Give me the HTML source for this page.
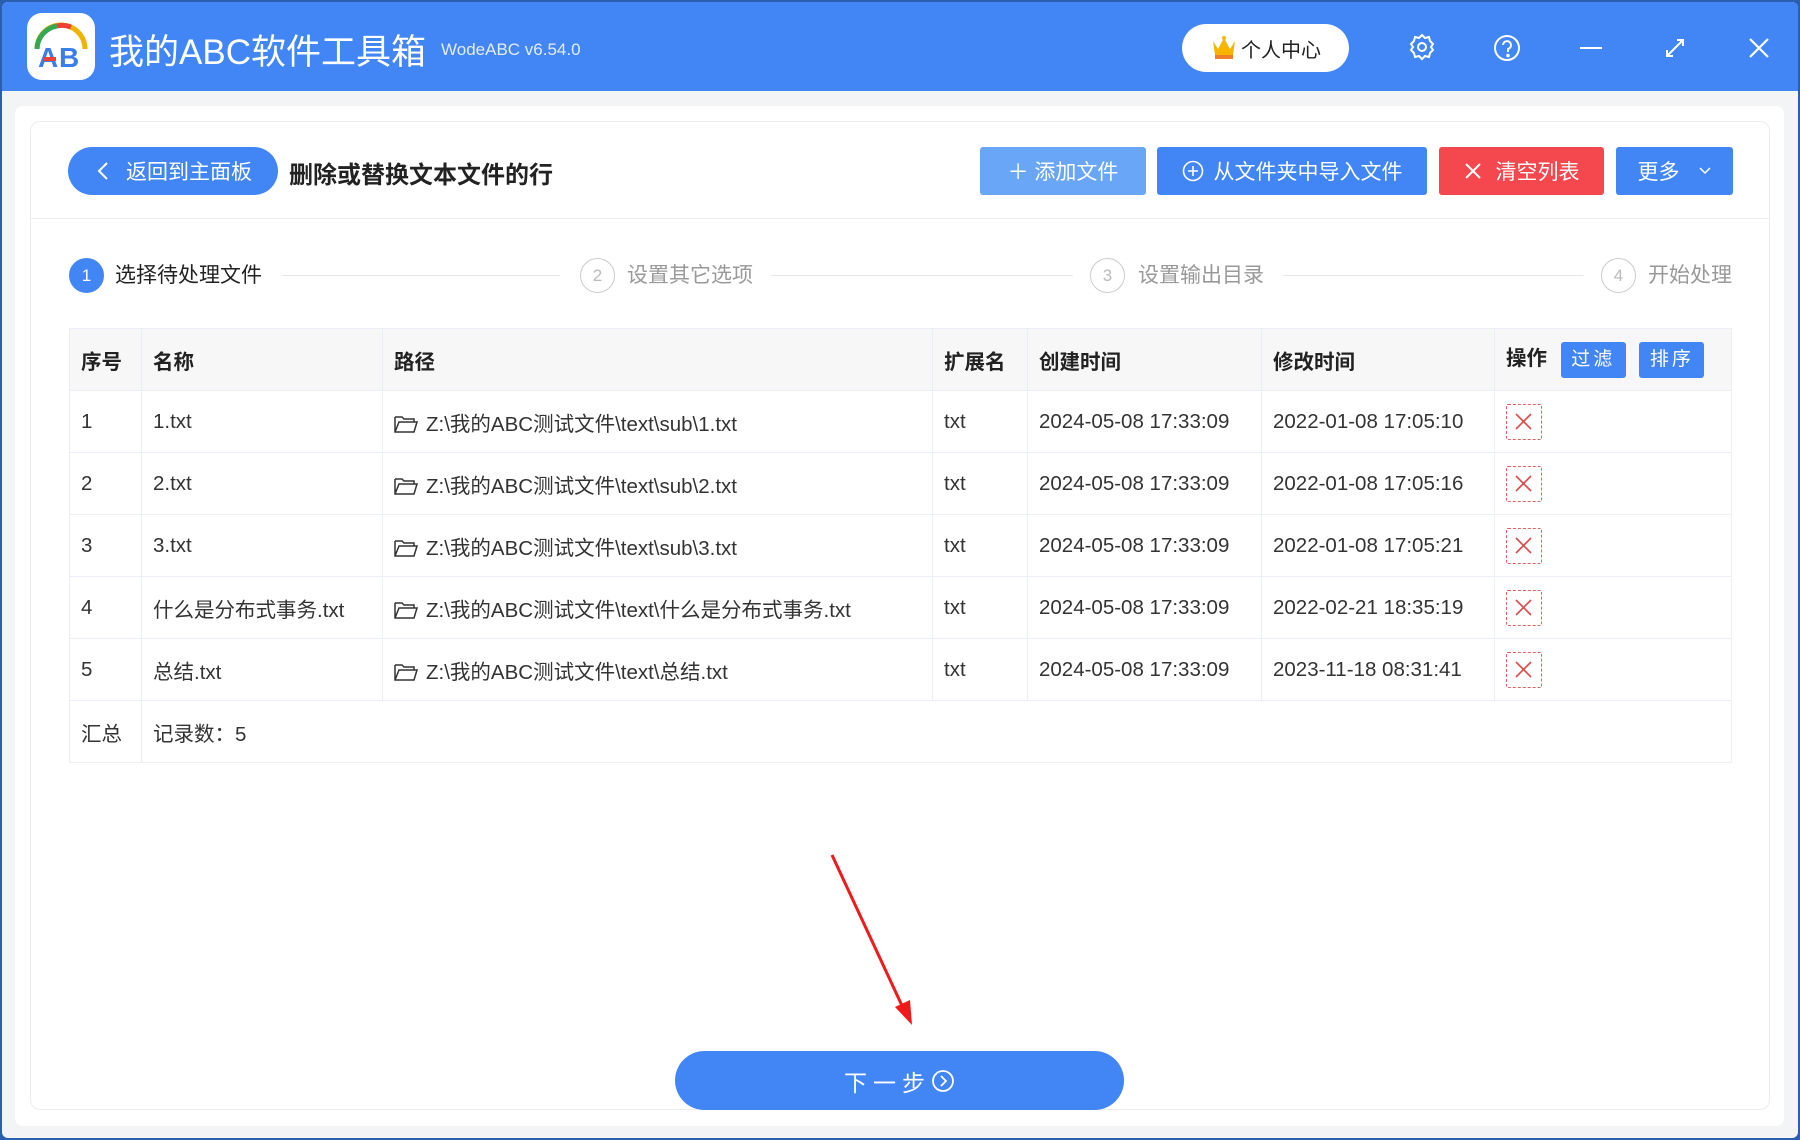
<!DOCTYPE html>
<html><head><meta charset="utf-8"><style>
*{box-sizing:border-box;margin:0;padding:0}
body{width:1800px;height:1140px;overflow:hidden;background:#2a5fb0;font-family:"Liberation Sans","Noto Sans CJK SC",sans-serif;position:relative}
.a{position:absolute}
#win{left:2px;top:2px;width:1796px;height:1136px;background:#f3f4f6;border-radius:6px;overflow:hidden}
#bar{left:0;top:0;width:1796px;height:89px;background:#4286f5}
.t{white-space:nowrap}
.btn{color:#fff;font-size:21px;display:flex;align-items:center;justify-content:center;border-radius:3px;height:48px;top:147px}
.step{font-size:21px;color:#999}
.circ{width:35px;height:35px;border-radius:50%;border:1.5px solid #ccc;color:#bbb;font-size:17px;display:flex;align-items:center;justify-content:center;top:256px}
.line{height:1px;background:#e6e6e6;top:273px}
table{border-collapse:collapse;position:absolute;left:69px;top:328px;width:1663px;font-size:20.5px;color:#333}
td{border:1px solid #ebeef5;padding:0 11px;height:62px;white-space:nowrap}
tr.h td{background:#f7f7f7;font-weight:bold;color:#222;font-size:20.5px}
.del{display:inline-block;width:36px;height:36px;border:1.5px dashed #e06060;border-radius:2px;vertical-align:middle;position:relative}
.fold{display:inline-block;vertical-align:-3px;margin-right:8px}
</style></head><body>
<div id="win" class="a">
<div id="bar" class="a">
 <div class="a" style="left:25px;top:11px;width:68px;height:67px;background:#fff;border-radius:15px">
  <svg width="68" height="67" viewBox="0 0 68 67"><path d="M10 36 A24 24 0 0 1 58 36" fill="none" stroke="#f0b400" stroke-width="5"/><path d="M10 36 A24 24 0 0 1 30 13" fill="none" stroke="#34a853" stroke-width="5"/><path d="M30 13 A24 24 0 0 1 44 14" fill="none" stroke="#ea4335" stroke-width="5"/>
  <text x="11" y="54" font-size="28" font-weight="bold" fill="#3b7ded" font-family="Liberation Sans">A</text><text x="32" y="54" font-size="28" font-weight="bold" fill="#3b7ded" font-family="Liberation Sans">B</text><rect x="17" y="44" width="12" height="4" fill="#ea4335"/></svg>
 </div>
 <div class="a t" style="left:107px;top:22px;font-size:35px;color:#fff">我的ABC软件工具箱</div>
 <div class="a t" style="left:439px;top:38px;font-size:17px;color:#e4ecfb">WodeABC v6.54.0</div>
 <div class="a" style="left:1180px;top:22px;width:167px;height:48px;background:#fff;border-radius:24px;display:flex;align-items:center;justify-content:center;font-size:20px;color:#222">
  <svg width="28" height="26" viewBox="0 0 28 26" style="margin-right:3px"><path d="M3 6 L8 14 L14 3 L20 14 L25 6 L23 20 L5 20 Z" fill="#f7b500"/><rect x="5" y="20" width="18" height="4" fill="#f07d2a"/><circle cx="14" cy="3" r="2" fill="#f7b500"/></svg>个人中心</div>
 <svg class="a" style="left:1405px;top:30px" width="30" height="30" viewBox="0 0 30 30" fill="none" stroke="#fff" stroke-width="2"><path d="M15 3l3 3 4-1 1 4 3 3-2 3 2 3-3 3-1 4-4-1-3 3-3-3-4 1-1-4-3-3 2-3-2-3 3-3 1-4 4 1z"/><circle cx="15" cy="15" r="4"/></svg>
 <svg class="a" style="left:1491px;top:32px" width="28" height="28" viewBox="0 0 28 28" fill="none" stroke="#fff" stroke-width="2"><circle cx="14" cy="14" r="12"/><path d="M10 11a4 4 0 1 1 5 4v3"/><circle cx="15" cy="21.5" r="0.8" fill="#fff"/></svg>
 <div class="a" style="left:1578px;top:45px;width:22px;height:2px;background:#fff"></div>
 <svg class="a" style="left:1660px;top:33px" width="26" height="26" viewBox="0 0 26 26" fill="none" stroke="#fff" stroke-width="2"><path d="M5 21L21 5M15 5h6v6M5 15v6h6"/></svg>
 <svg class="a" style="left:1746px;top:35px" width="22" height="22" viewBox="0 0 22 22" stroke="#fff" stroke-width="2.2"><path d="M2 2L20 20M20 2L2 20"/></svg>
</div>
<div class="a" style="left:13px;top:104px;width:1769px;height:1020px;background:#fff;border-radius:8px"></div>
<div class="a" style="left:28px;top:119px;width:1740px;height:989px;border:1px solid #ececec;border-radius:10px"></div>
<div class="a" style="left:29px;top:216px;width:1738px;height:1px;background:#ececec"></div>
<div class="a t" style="left:66px;top:145px;width:210px;height:48px;background:#4286f5;border-radius:24px;color:#fff;font-size:21px;display:flex;align-items:center;padding-left:28px"><svg width="14" height="20" viewBox="0 0 14 20" style="margin-right:16px"><path d="M11 2L3 10l8 8" fill="none" stroke="#fff" stroke-width="2"/></svg>返回到主面板</div>
<div class="a t" style="left:287px;top:153px;font-size:24px;font-weight:bold;color:#222">删除或替换文本文件的行</div>
<div class="a btn" style="left:978px;width:166px;background:#6aa6f8;top:145px">＋&nbsp;添加文件</div>
<div class="a btn" style="left:1155px;width:270px;background:#4286f5;top:145px"><svg width="22" height="22" viewBox="0 0 22 22" style="margin-right:10px" fill="none" stroke="#fff" stroke-width="1.6"><circle cx="11" cy="11" r="9.5"/><path d="M11 6v10M6 11h10"/></svg>从文件夹中导入文件</div>
<div class="a btn" style="left:1437px;width:165px;background:#f5474e;top:145px"><svg width="18" height="18" viewBox="0 0 18 18" style="margin-right:14px" stroke="#fff" stroke-width="2"><path d="M2 2l14 14M16 2L2 16"/></svg>清空列表</div>
<div class="a btn" style="left:1614px;width:117px;background:#4286f5;top:145px">更多<svg width="14" height="10" viewBox="0 0 14 10" style="margin-left:18px"><path d="M2 2l5 5 5-5" fill="none" stroke="#fff" stroke-width="1.5"/></svg></div>

<div class="a circ" style="left:67px;background:#4286f5;border-color:#4286f5;color:#fff">1</div>
<div class="a t step" style="left:113px;top:257px;color:#222">选择待处理文件</div>
<div class="a line" style="left:280px;width:278px"></div>
<div class="a circ" style="left:578px">2</div>
<div class="a t step" style="left:625px;top:257px">设置其它选项</div>
<div class="a line" style="left:769px;width:302px"></div>
<div class="a circ" style="left:1088px">3</div>
<div class="a t step" style="left:1136px;top:257px">设置输出目录</div>
<div class="a line" style="left:1281px;width:300px"></div>
<div class="a circ" style="left:1599px">4</div>
<div class="a t step" style="left:1646px;top:257px">开始处理</div>
</div>

<table>
<colgroup><col style="width:72px"><col style="width:241px"><col style="width:550px"><col style="width:95px"><col style="width:234px"><col style="width:233px"><col></colgroup>
<tr class="h"><td>序号</td><td>名称</td><td>路径</td><td>扩展名</td><td>创建时间</td><td>修改时间</td><td>操作 <span style="display:inline-block;background:#4286f5;color:#fff;font-weight:normal;font-size:19px;width:65px;height:36px;line-height:36px;text-align:center;border-radius:3px;margin-left:8px;letter-spacing:3px">过滤</span> <span style="display:inline-block;background:#4286f5;color:#fff;font-weight:normal;font-size:19px;width:65px;height:36px;line-height:36px;text-align:center;border-radius:3px;margin-left:8px;letter-spacing:3px">排序</span></td></tr>
<tr><td>1</td><td>1.txt</td><td><svg class="fold" width="24" height="20" viewBox="0 0 24 20" fill="none" stroke="#333" stroke-width="1.5"><path d="M1 3h7l2 2h10v3M1 3v15h19l3-10H5L1 18"/></svg>Z:\我的ABC测试文件\text\sub\1.txt</td><td>txt</td><td>2024-05-08 17:33:09</td><td>2022-01-08 17:05:10</td><td><span class="del"><svg width="33" height="33" viewBox="0 0 33 33" stroke="#e04848" stroke-width="1.6"><path d="M9 9l15 15M24 9L9 24"/></svg></span></td></tr>
<tr><td>2</td><td>2.txt</td><td><svg class="fold" width="24" height="20" viewBox="0 0 24 20" fill="none" stroke="#333" stroke-width="1.5"><path d="M1 3h7l2 2h10v3M1 3v15h19l3-10H5L1 18"/></svg>Z:\我的ABC测试文件\text\sub\2.txt</td><td>txt</td><td>2024-05-08 17:33:09</td><td>2022-01-08 17:05:16</td><td><span class="del"><svg width="33" height="33" viewBox="0 0 33 33" stroke="#e04848" stroke-width="1.6"><path d="M9 9l15 15M24 9L9 24"/></svg></span></td></tr>
<tr><td>3</td><td>3.txt</td><td><svg class="fold" width="24" height="20" viewBox="0 0 24 20" fill="none" stroke="#333" stroke-width="1.5"><path d="M1 3h7l2 2h10v3M1 3v15h19l3-10H5L1 18"/></svg>Z:\我的ABC测试文件\text\sub\3.txt</td><td>txt</td><td>2024-05-08 17:33:09</td><td>2022-01-08 17:05:21</td><td><span class="del"><svg width="33" height="33" viewBox="0 0 33 33" stroke="#e04848" stroke-width="1.6"><path d="M9 9l15 15M24 9L9 24"/></svg></span></td></tr>
<tr><td>4</td><td>什么是分布式事务.txt</td><td><svg class="fold" width="24" height="20" viewBox="0 0 24 20" fill="none" stroke="#333" stroke-width="1.5"><path d="M1 3h7l2 2h10v3M1 3v15h19l3-10H5L1 18"/></svg>Z:\我的ABC测试文件\text\什么是分布式事务.txt</td><td>txt</td><td>2024-05-08 17:33:09</td><td>2022-02-21 18:35:19</td><td><span class="del"><svg width="33" height="33" viewBox="0 0 33 33" stroke="#e04848" stroke-width="1.6"><path d="M9 9l15 15M24 9L9 24"/></svg></span></td></tr>
<tr><td>5</td><td>总结.txt</td><td><svg class="fold" width="24" height="20" viewBox="0 0 24 20" fill="none" stroke="#333" stroke-width="1.5"><path d="M1 3h7l2 2h10v3M1 3v15h19l3-10H5L1 18"/></svg>Z:\我的ABC测试文件\text\总结.txt</td><td>txt</td><td>2024-05-08 17:33:09</td><td>2023-11-18 08:31:41</td><td><span class="del"><svg width="33" height="33" viewBox="0 0 33 33" stroke="#e04848" stroke-width="1.6"><path d="M9 9l15 15M24 9L9 24"/></svg></span></td></tr>
<tr><td style="height:59px">汇总</td><td colspan="6" style="border-left:1px solid #ebeef5">记录数：5</td></tr>
</table>

<div class="a" style="left:675px;top:1051px;width:449px;height:59px;background:#4286f5;border-radius:30px;color:#fff;font-size:23px;display:flex;align-items:center;justify-content:center;letter-spacing:6px">下一步<svg width="24" height="24" viewBox="0 0 24 24" fill="none" stroke="#fff" stroke-width="1.8"><circle cx="12" cy="12" r="10"/><path d="M10 7l5 5-5 5"/></svg></div>
<svg class="a" style="left:0;top:0" width="1800" height="1140"><path d="M832 855 L904 1010" stroke="#f01a1a" stroke-width="3"/><path d="M895 1007 L912 1025 L910 1000 Z" fill="#f01a1a"/></svg>
</body></html>
